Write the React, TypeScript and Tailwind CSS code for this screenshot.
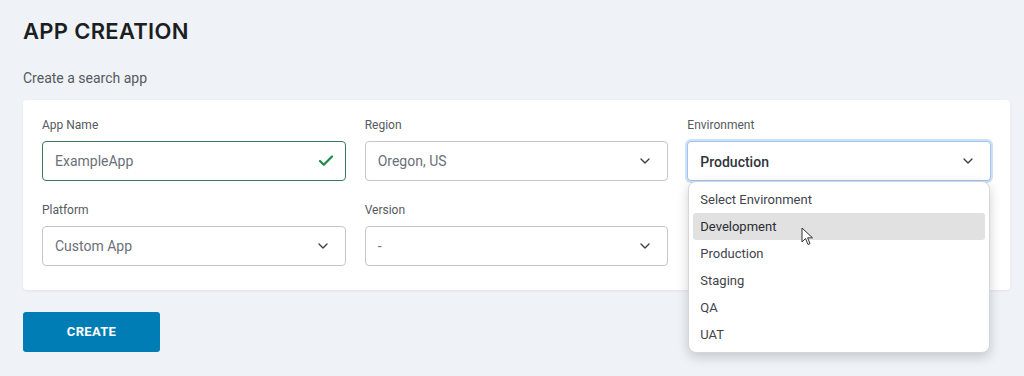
import { Check, ChevronDown } from "lucide-react";

const body = { fontFamily: "Roboto, 'Noto Sans', sans-serif" };

function Field({ label, children }: { label: string; children: React.ReactNode }) {
  return (
    <div className="flex flex-col">
      <label className="text-[12px] text-[#555a60] mb-[8px] leading-[16px] h-[16px]">{label}</label>
      {children}
    </div>
  );
}

function Select({ value, muted = true }: { value: string; muted?: boolean }) {
  return (
    <div className="h-[40px] rounded-[4px] border border-[#c3c6cc] bg-white flex items-center justify-between pl-[12px] pr-[14px]">
      <span className={`text-[14px] ${muted ? "text-[#6b7079]" : "text-[#30343a]"}`}>{value}</span>
      <ChevronDown className="w-[16px] h-[16px] text-[#3a3f46]" strokeWidth={2} />
    </div>
  );
}

const envs = ["Select Environment", "Development", "Production", "Staging", "QA", "UAT"];

export default function App() {
  return (
    <main className="min-h-[376px] bg-[#eff2f7] px-[23px] pt-[18px]" style={body}>
      <h1
        className="text-[22px] font-semibold text-[#1c1e22] tracking-[0.3px] leading-[26px]"
        style={{ fontFamily: "Inter, 'Open Sans', sans-serif" }}
      >
        APP CREATION
      </h1>
      <p className="text-[14px] text-[#555a60] mt-[26px] leading-[16px]">Create a search app</p>

      <div className="mt-[14px] w-[987px] bg-white rounded-[4px] shadow-[0_1px_3px_rgba(0,0,0,0.06)] px-[19px] pt-[17px] pb-[24px] grid grid-cols-3 gap-x-[19px] gap-y-[21px]">
        <Field label="App Name">
          <div className="h-[40px] rounded-[4px] border border-[#3d7a5c] bg-white flex items-center justify-between pl-[12px] pr-[10px]">
            <span className="text-[14px] text-[#6b7079]">ExampleApp</span>
            <Check className="w-[18px] h-[18px] text-[#1f8a4c]" strokeWidth={3} />
          </div>
        </Field>
        <Field label="Region">
          <Select value="Oregon, US" />
        </Field>
        <Field label="Environment">
          <div className="relative">
            <div className="h-[40px] rounded-[4px] border border-[#9ec3ee] ring-2 ring-[#cfe1f7] bg-white flex items-center justify-between pl-[12px] pr-[14px]">
              <span className="text-[14px] font-medium text-[#30343a] mt-[2px]">Production</span>
              <ChevronDown className="w-[16px] h-[16px] text-[#3a3f46]" strokeWidth={2} />
            </div>
            <ul className="absolute left-[1px] right-[1px] top-[40px] z-10 bg-white rounded-[8px] border border-[#d4d6da] shadow-[0_4px_12px_rgba(0,0,0,0.18)] px-[4px] py-[4px] text-[13px]">
              {envs.map((e) => (
                <li
                  key={e}
                  className={`relative h-[27px] flex items-center px-[7px] rounded-[3px] ${
                    e === "Development" ? "bg-[#e1e1e1] text-[#2a2d33]" : "text-[#3f444b]"
                  }`}
                >
                  {e}
                  {e === "Development" && (
                    <svg className="absolute left-[108px] top-[14px]" width="13" height="19" viewBox="0 0 13 19">
                      <path d="M1 1 L1 15 L4.5 11.5 L7 17.5 L9 16.6 L6.6 10.8 L11.5 10.8 Z" fill="white" stroke="#333" strokeWidth="1" strokeLinejoin="round" />
                    </svg>
                  )}
                </li>
              ))}
            </ul>
          </div>
        </Field>
        <Field label="Platform">
          <Select value="Custom App" />
        </Field>
        <Field label="Version">
          <Select value="-" />
        </Field>
        <div />
      </div>

      <button className="mt-[22px] w-[137px] h-[40px] rounded-[3px] bg-[#007db5] text-white text-[13px] font-bold tracking-[0.3px]">
        CREATE
      </button>
    </main>
  );
}
